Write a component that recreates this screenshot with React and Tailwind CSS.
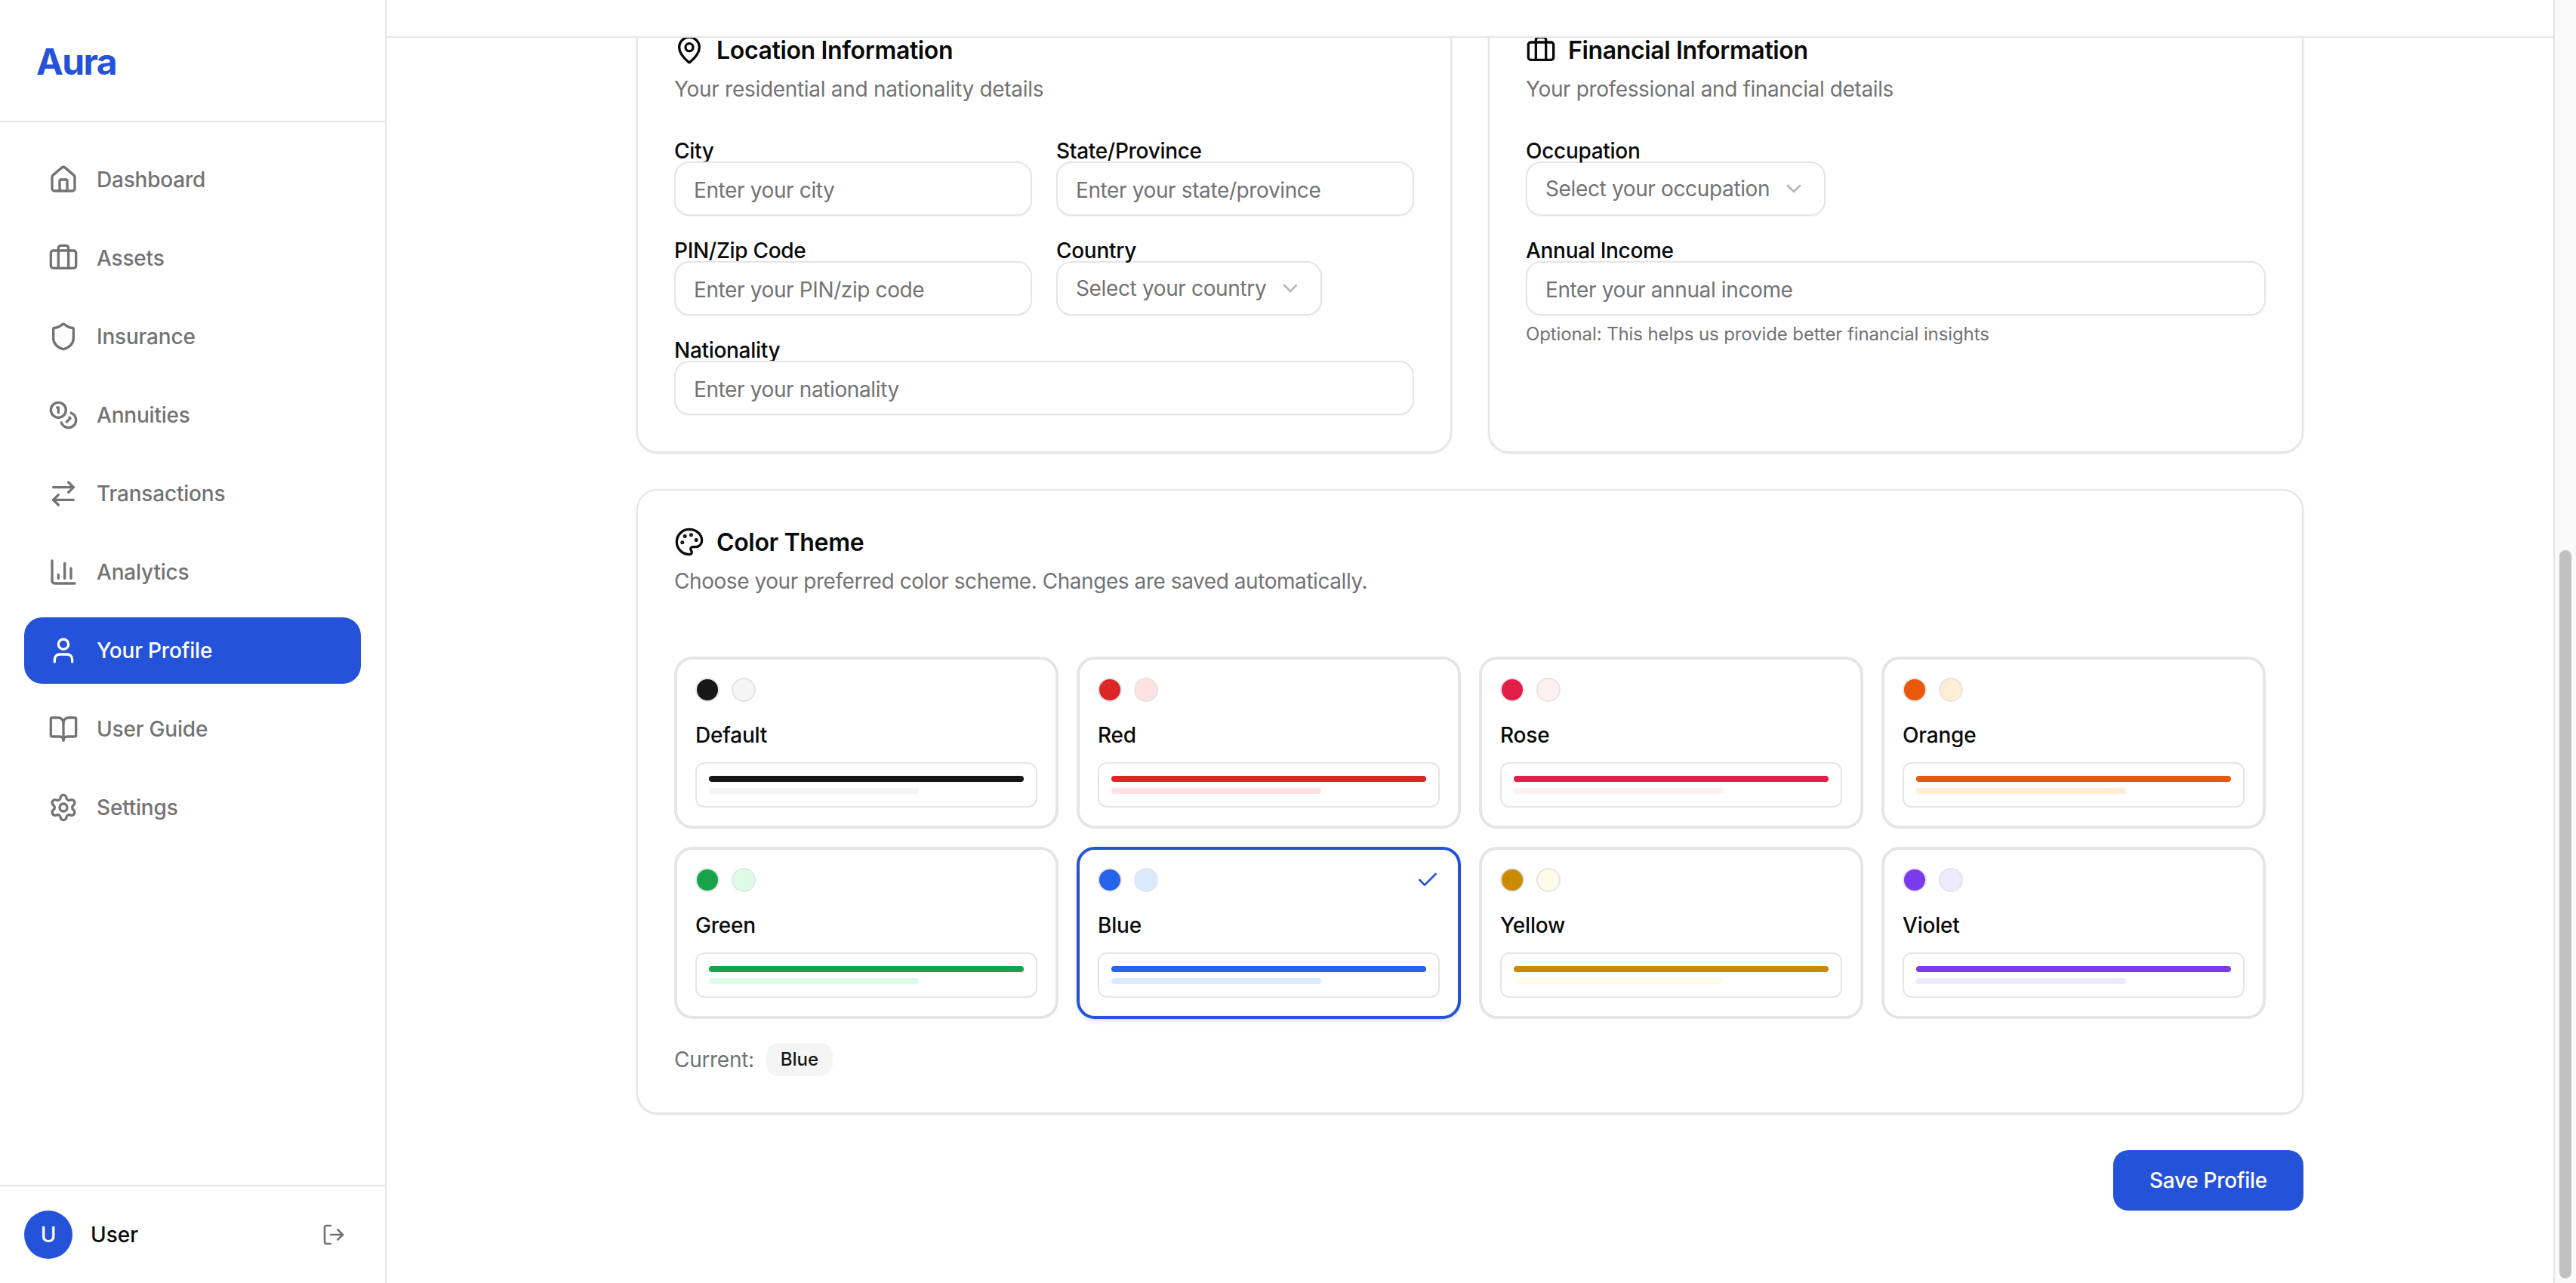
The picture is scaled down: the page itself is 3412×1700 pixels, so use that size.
import React from 'react';
import {
  House, Briefcase, Shield, Coins, ArrowRightLeft, ChartColumn, User, BookOpen, Settings,
  LogOut, MapPin, Palette, Check, ChevronDown,
} from 'lucide-react';

const navItems = [
  { label: 'Dashboard', icon: House },
  { label: 'Assets', icon: Briefcase },
  { label: 'Insurance', icon: Shield },
  { label: 'Annuities', icon: Coins },
  { label: 'Transactions', icon: ArrowRightLeft },
  { label: 'Analytics', icon: ChartColumn },
  { label: 'Your Profile', icon: User, active: true },
  { label: 'User Guide', icon: BookOpen },
  { label: 'Settings', icon: Settings },
];

const themes = [
  { name: 'Default', main: 'bg-[#171717]', soft: 'bg-[#f5f5f5]' },
  { name: 'Red', main: 'bg-[#dc2626]', soft: 'bg-[#fee2e2]' },
  { name: 'Rose', main: 'bg-[#e11d48]', soft: 'bg-[#fff1f2]' },
  { name: 'Orange', main: 'bg-[#ea580c]', soft: 'bg-[#ffedd5]' },
  { name: 'Green', main: 'bg-[#16a34a]', soft: 'bg-[#dcfce7]' },
  { name: 'Blue', main: 'bg-[#2563eb]', soft: 'bg-[#dbeafe]', selected: true },
  { name: 'Yellow', main: 'bg-[#ca8a04]', soft: 'bg-[#fefce8]' },
  { name: 'Violet', main: 'bg-[#7c3aed]', soft: 'bg-[#ede9fe]' },
];

function Sidebar() {
  return (
    <aside className="flex h-full w-[512px] shrink-0 flex-col border-r-2 border-[#e5e5e5] bg-white">
      <div className="border-b-2 border-[#e5e5e5] p-12">
        <h1 className="translate-y-[2px] text-[48px] leading-[64px] font-bold tracking-[-1.6px] text-[#2452d9]">Aura</h1>
      </div>
      <nav className="flex flex-1 flex-col gap-4 p-8">
        {navItems.map((item) => {
          const Icon = item.icon;
          return (
            <a
              key={item.label}
              className={`flex h-[88px] items-center gap-6 rounded-3xl px-8 text-[28px] font-medium tracking-[-0.2px] ${
                item.active ? 'bg-[#2452d9] text-white' : 'text-[#737373]'
              }`}
            >
              <Icon size={40} />
              {item.label}
            </a>
          );
        })}
      </nav>
      <div className="flex items-center justify-between border-t-2 border-[#e5e5e5] p-8">
        <div className="flex items-center gap-6">
          <div className="flex h-16 w-16 items-center justify-center rounded-full bg-[#2452d9] text-[28px] font-medium text-white">U</div>
          <span className="text-[28px] font-medium text-[#0a0a0a]">User</span>
        </div>
        <LogOut size={32} className="mr-5 text-[#737373]" />
      </div>
    </aside>
  );
}

function Field({ label, placeholder, className = '' }) {
  return (
    <div className={className}>
      <label className="block text-[28px] leading-none font-medium tracking-[-0.3px] text-[#0a0a0a]">{label}</label>
      <input
        placeholder={placeholder}
        className="h-[72px] w-full rounded-[20px] border-2 border-[#e5e5e5] bg-white px-6 pt-[3px] text-[28px] tracking-[-0.38px] shadow-xs outline-none placeholder:text-[#737373]"
      />
    </div>
  );
}

function SelectField({ label, placeholder }) {
  return (
    <div>
      <label className="block text-[28px] leading-none font-medium tracking-[-0.3px] text-[#0a0a0a]">{label}</label>
      <button className="flex h-[72px] items-center gap-4 rounded-[20px] border-2 border-[#e5e5e5] bg-white px-6 text-[28px] tracking-[-0.36px] text-[#737373] shadow-xs">
        {placeholder}
        <ChevronDown size={32} className="opacity-50" />
      </button>
    </div>
  );
}

function CardTitle({ icon: Icon, title, description, spacing = 'tracking-[-0.3px]' }) {
  return (
    <>
      <div className="flex h-10 items-center gap-4">
        <Icon size={40} className="text-[#0a0a0a]" />
        <h2 className="translate-y-[1px] text-[32px] leading-none font-semibold tracking-[-0.35px] text-[#0a0a0a]">{title}</h2>
      </div>
      <p className={`mt-3 text-[28px] leading-10 text-[#737373] ${spacing}`}>{description}</p>
    </>
  );
}

function ThemeSwatch({ theme }) {
  return (
    <div
      className={`rounded-3xl border-4 bg-white p-6 ${
        theme.selected ? 'border-[#2452d9] shadow-md' : 'border-[#e5e5e5]'
      }`}
    >
      <div className="flex h-8 items-center justify-between">
        <div className="flex gap-4">
          <span className={`h-8 w-8 rounded-full border-2 border-[#e5e5e5] ${theme.main}`} />
          <span className={`h-8 w-8 rounded-full border-2 border-[#e5e5e5] ${theme.soft}`} />
        </div>
        {theme.selected && <Check size={32} className="text-[#2452d9]" />}
      </div>
      <div className="mt-6 text-[28px] leading-10 font-medium tracking-[-0.2px] text-[#0a0a0a]">{theme.name}</div>
      <div className="mt-4 h-[60px] rounded-xl border-2 border-[#e5e5e5] p-4">
        <div className={`h-2 rounded-full ${theme.main}`} />
        <div className={`mt-2 h-2 w-2/3 rounded-full ${theme.soft}`} />
      </div>
    </div>
  );
}

export default function App() {
  return (
    <div className="flex h-screen overflow-hidden bg-white font-[Inter,sans-serif]">
      <Sidebar />
      <div className="flex min-w-0 flex-1 flex-col">
        <header className="relative z-10 h-[50px] shrink-0 border-b-2 border-[#e5e5e5] bg-white" />
        <main className="flex-1 overflow-hidden">
          <div className="mx-auto -mt-[54px] w-[2208px]">
            <div className="grid grid-cols-2 gap-12">
              <section className="rounded-[28px] border-2 border-[#e5e5e5] bg-white p-12 shadow-sm">
                <CardTitle icon={MapPin} title="Location Information" description="Your residential and nationality details" />
                <div className="mt-12 grid grid-cols-2 gap-8">
                  <Field label="City" placeholder="Enter your city" />
                  <Field label="State/Province" placeholder="Enter your state/province" />
                  <Field label="PIN/Zip Code" placeholder="Enter your PIN/zip code" />
                  <SelectField label="Country" placeholder="Select your country" />
                  <Field label="Nationality" placeholder="Enter your nationality" className="col-span-2" />
                </div>
              </section>
              <section className="rounded-[28px] border-2 border-[#e5e5e5] bg-white p-12 shadow-sm">
                <CardTitle icon={Briefcase} title="Financial Information" description="Your professional and financial details" spacing="tracking-[-0.38px]" />
                <div className="mt-12 flex flex-col gap-8">
                  <SelectField label="Occupation" placeholder="Select your occupation" />
                  <div>
                    <Field label="Annual Income" placeholder="Enter your annual income" />
                    <p className="mt-[9px] text-[24px] leading-8 tracking-[-0.11px] text-[#737373]">Optional: This helps us provide better financial insights</p>
                  </div>
                </div>
              </section>
            </div>

            <section className="mt-12 rounded-[28px] border-2 border-[#e5e5e5] bg-white p-12 shadow-sm">
              <CardTitle icon={Palette} title="Color Theme" description="Choose your preferred color scheme. Changes are saved automatically." spacing="tracking-[-0.44px]" />
              <div className="mt-20 grid grid-cols-4 gap-6">
                {themes.map((theme) => (
                  <ThemeSwatch key={theme.name} theme={theme} />
                ))}
              </div>
              <div className="mt-8 flex items-center gap-4">
                <span className="text-[28px] tracking-[-0.3px] text-[#737373]">Current:</span>
                <span className="flex h-11 items-center rounded-2xl bg-[#f5f5f5] px-[19px] text-[24px] font-medium text-[#171717]">Blue</span>
              </div>
            </section>

            <div className="mt-12 flex justify-end">
              <button className="h-20 w-[252px] rounded-[20px] bg-[#2452d9] text-[28px] font-medium tracking-[-0.3px] text-white shadow-xs">Save Profile</button>
            </div>
          </div>
        </main>
      </div>
      {/* page scrollbar */}
      <div className="flex h-full w-[30px] shrink-0 flex-col justify-end border-l-2 border-[#e5e5e5] bg-[#fafafa] pb-1.5 pl-[6px]">
        <div className="h-[965px] w-4 rounded-full bg-[#c1c1c1]" />
      </div>
    </div>
  );
}
